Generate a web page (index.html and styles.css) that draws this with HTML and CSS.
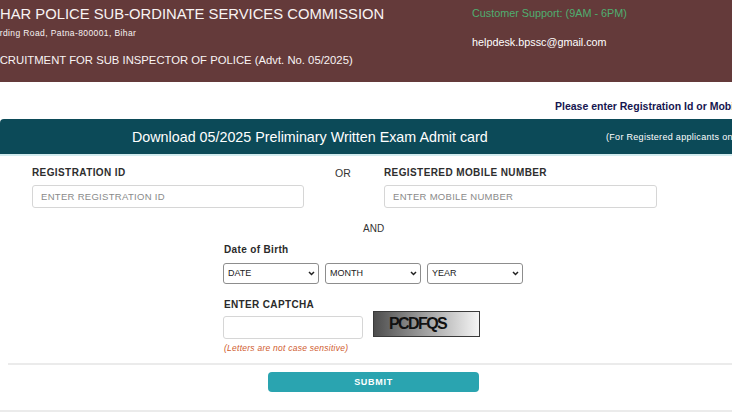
FILE: index.html
```html
<!DOCTYPE html>
<html lang="en">
<head>
<meta charset="utf-8">
<title>BPSSC Admit Card</title>
<link rel="stylesheet" href="styles.css">
</head>
<body>
<header class="top">
  <div class="brand">
    <div class="brand-title">BIHAR POLICE SUB-ORDINATE SERVICES COMMISSION</div>
    <div class="brand-addr">Harding Road, Patna-800001, Bihar</div>
    <div class="brand-recruit">RECRUITMENT FOR SUB INSPECTOR OF POLICE (Advt. No. 05/2025)</div>
  </div>
  <div class="support">
    <div class="support-hours">Customer Support: (9AM - 6PM)</div>
    <div class="support-mail">helpdesk.bpssc@gmail.com</div>
  </div>
</header>

<main class="main">
  <div class="notice">Please enter Registration Id or Mobile Number and Date of Birth to download the Admit Card</div>

  <div class="band">
    <div class="band-title">Download 05/2025 Preliminary Written Exam Admit card</div>
    <div class="band-note">(For Registered applicants only)</div>
  </div>

  <form class="form">
    <div class="id-row">
      <div class="field">
        <div class="label">REGISTRATION ID</div>
        <input class="input" type="text" placeholder="ENTER REGISTRATION ID">
      </div>
      <div class="or">OR</div>
      <div class="field field-wide">
        <div class="label">REGISTERED MOBILE NUMBER</div>
        <input class="input" type="text" placeholder="ENTER MOBILE NUMBER">
      </div>
    </div>

    <div class="and">AND</div>

    <div class="dob">
      <div class="label-lg">Date of Birth</div>
      <div class="selects">
        <div class="sel">
          <select><option>DATE</option></select>
          <svg class="chev" width="7" height="5" viewBox="0 0 7 5"><path d="M1 1 L3.5 3.5 L6 1" fill="none" stroke="#222" stroke-width="1.5"/></svg>
        </div>
        <div class="sel">
          <select><option>MONTH</option></select>
          <svg class="chev" width="7" height="5" viewBox="0 0 7 5"><path d="M1 1 L3.5 3.5 L6 1" fill="none" stroke="#222" stroke-width="1.5"/></svg>
        </div>
        <div class="sel">
          <select><option>YEAR</option></select>
          <svg class="chev" width="7" height="5" viewBox="0 0 7 5"><path d="M1 1 L3.5 3.5 L6 1" fill="none" stroke="#222" stroke-width="1.5"/></svg>
        </div>
      </div>

      <div class="label-lg captcha-label">ENTER CAPTCHA</div>
      <div class="captcha-row">
        <input class="input captcha-input" type="text">
        <div class="captcha-img">PCDFQS</div>
      </div>
      <div class="hint">(Letters are not case sensitive)</div>
    </div>

    <div class="rule rule-inset"></div>
    <button class="submit" type="button">SUBMIT</button>
    <div class="rule rule-bottom"></div>
  </form>
</main>
</body>
</html>
```

FILE: styles.css
```css
* { box-sizing: border-box; }
html, body { margin: 0; padding: 0; }
body {
  width: 732px;
  height: 412px;
  overflow: hidden;
  background: #ffffff;
  font-family: "Liberation Sans", Arial, sans-serif;
  color: #333333;
}

/* header */
.top {
  display: flex;
  height: 82px;
  background: #643a3a;
  color: #f8f3f3;
  overflow: hidden;
  white-space: nowrap;
}
.brand { flex: none; width: 486px; margin-left: -14px; }
.brand-title { padding-top: 6px; font-size: 14.8px; line-height: 17px; }
.brand-addr { margin-top: 5px; padding-left: 2px; font-size: 8.5px; line-height: 10px; letter-spacing: 0.4px; }
.brand-recruit { margin-top: 15px; margin-left: -2px; font-size: 11.3px; line-height: 14px; }
.support { padding-top: 6.5px; font-size: 10.8px; line-height: 13px; }
.support-hours { color: #4fae70; }
.support-mail { margin-top: 16.5px; color: #ffffff; }

/* notice + band */
.notice {
  margin-top: 18px;
  padding-left: 555px;
  font-size: 10.5px;
  line-height: 13px;
  font-weight: bold;
  color: #161650;
  white-space: nowrap;
}
.band {
  margin-top: 6px;
  height: 37px;
  display: grid;
  grid-template-columns: 606px auto;
  align-items: center;
  background: #0c4a58;
  border-bottom: 2px solid #d3ecef;
  border-top-left-radius: 4px;
  color: #ffffff;
  white-space: nowrap;
  overflow: hidden;
}
.band-title { padding-left: 132px; font-size: 14.3px; }
.band-note { font-size: 9px; letter-spacing: 0.3px; }

/* form */
.form { padding-top: 11px; margin: 0; }
.id-row { display: flex; padding-left: 32px; }
.field { width: 272px; }
.field-wide { width: 273px; }
.label {
  font-size: 10px;
  line-height: 12px;
  font-weight: bold;
  letter-spacing: 0.4px;
  color: #2e2e2e;
  white-space: nowrap;
}
.input {
  display: block;
  margin-top: 6px;
  width: 100%;
  height: 23px;
  border: 1px solid #d6d6d6;
  border-radius: 3px;
  padding: 0 8px;
  font-family: "Liberation Sans", Arial, sans-serif;
  font-size: 9.5px;
  letter-spacing: 0.3px;
  color: #333333;
  background: #ffffff;
  outline: none;
}
.input::placeholder { color: #8a8a8a; opacity: 1; }
.or {
  width: 80px;
  padding-left: 31px;
  font-size: 10.5px;
  line-height: 12px;
  color: #333333;
}
.and {
  margin-top: 15px;
  padding-left: 363px;
  font-size: 10px;
  line-height: 12px;
  color: #333333;
}
.dob { margin-top: 9px; padding-left: 223px; }
.label-lg {
  font-size: 10px;
  line-height: 12px;
  font-weight: bold;
  letter-spacing: 0.35px;
  color: #2a2a2a;
  padding-left: 1px;
}
.selects { display: flex; gap: 6px; margin-top: 6px; }
.sel { position: relative; width: 96px; height: 21px; }
.sel select {
  appearance: none;
  -webkit-appearance: none;
  width: 100%;
  height: 100%;
  border: 1px solid #8d8d8d;
  border-radius: 3px;
  padding: 0 0 0 4px;
  background: #ffffff;
  font-family: "Liberation Sans", Arial, sans-serif;
  font-size: 9px;
  color: #222222;
  outline: none;
}
.chev { position: absolute; right: 4px; top: 9px; }
.captcha-label { margin-top: 16px; }
.captcha-row { display: flex; align-items: flex-start; }
.captcha-input { width: 140px; margin-top: 5px; }
.captcha-img {
  margin-left: 10px;
  width: 107px;
  height: 26px;
  border: 1px solid #3a3a3a;
  background: linear-gradient(to right, #4d4d4d 0%, #9a9a9a 45%, #f5f5f5 100%);
  padding-left: 15px;
  font-size: 16px;
  line-height: 24px;
  font-weight: bold;
  letter-spacing: -1.6px;
  color: #111111;
}
.hint {
  margin-top: 3.5px;
  padding-left: 1px;
  font-size: 8.5px;
  line-height: 11px;
  font-style: italic;
  letter-spacing: 0.25px;
  color: #cf5b2e;
}
.rule { height: 2px; background: #ebebeb; }
.rule-inset { margin-top: 9.5px; margin-left: 8px; }
.submit {
  display: block;
  margin: 7px 0 0 268px;
  width: 211px;
  height: 20px;
  border: none;
  border-radius: 4px;
  background: #2aa4b0;
  color: #ffffff;
  font-family: "Liberation Sans", Arial, sans-serif;
  font-size: 9px;
  font-weight: bold;
  letter-spacing: 0.7px;
  padding: 0;
}
.rule-bottom { margin-top: 18px; }
```
